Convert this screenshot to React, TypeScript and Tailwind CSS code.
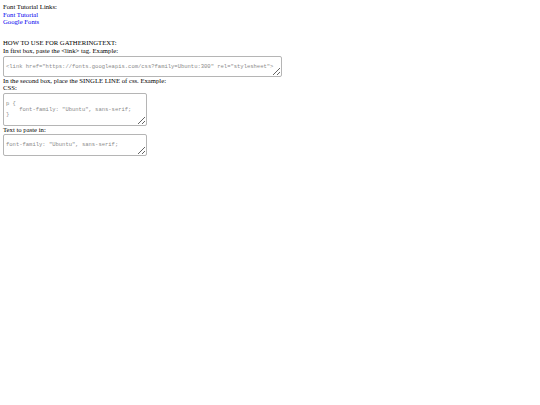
import React from 'react';

const boxClass =
  "block border border-[#b5b5b5] rounded-[2px] px-[2px] py-[2px] font-['Liberation_Mono',monospace] text-[5.5px] leading-[5.3px] text-[#777] placeholder:text-[#8a8a8a] bg-white";

export default function App() {
  return (
    <div className="min-h-[405px] w-[540px] bg-white px-[3px] pt-[3px] font-['Liberation_Serif',serif] text-[6.7px] leading-[7.7px] text-black">
      {/* Links */}
      <div>Font Tutorial Links:</div>
      <div>
        <a href="#" className="text-[#0000ee]">Font Tutorial</a>
      </div>
      <div>
        <a href="#" className="text-[#0000ee]">Google Fonts</a>
      </div>

      {/* Instructions */}
      <div className="mt-[13px]">HOW TO USE FOR GATHERINGTEXT:</div>
      <div>In first box, paste the &lt;link&gt; tag. Example:</div>
      <textarea
        readOnly
        className={`${boxClass} mt-[1px] h-[21px] w-[279px]`}
        placeholder={'\n<link href="https://fonts.googleapis.com/css?family=Ubuntu:300" rel="stylesheet">'}
      />
      <div>In the second box, place the SINGLE LINE of css. Example:</div>
      <div>CSS:</div>
      <textarea
        readOnly
        className={`${boxClass} mt-[1px] h-[33px] w-[144px]`}
        placeholder={'\np {\n    font-family: "Ubuntu", sans-serif;\n}'}
      />
      <div>Text to paste in:</div>
      <textarea
        readOnly
        className={`${boxClass} h-[22px] w-[144px]`}
        placeholder={'\nfont-family: "Ubuntu", sans-serif;'}
      />
    </div>
  );
}
